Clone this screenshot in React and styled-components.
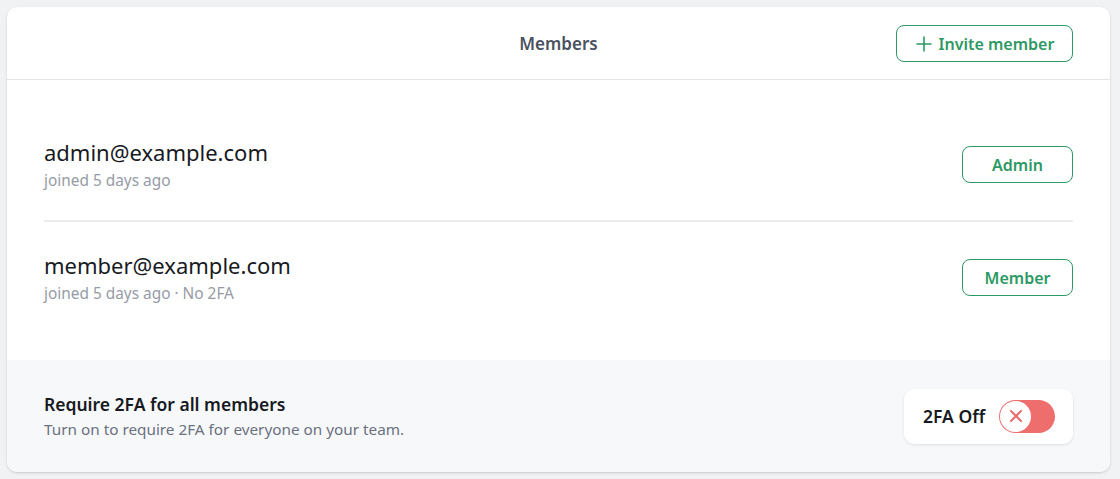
import React, { useState } from 'react';
import styled, { createGlobalStyle } from 'styled-components';

const GREEN = '#2d9964';

const GlobalStyle = createGlobalStyle`
  html, body {
    margin: 0;
    background: #f1f2f4;
    font-family: "Noto Sans", "Open Sans", sans-serif;
  }
  body {
    padding: 7px 10px 7px 7px;
  }
`;

const members = [
  { email: 'admin@example.com', meta: 'joined 5 days ago', role: 'Admin' },
  { email: 'member@example.com', meta: 'joined 5 days ago · No 2FA', role: 'Member' },
];

export default function App() {
  const [require2fa, setRequire2fa] = useState(false);

  return (
    <>
      <GlobalStyle />
      <StyledCard>
        <StyledHeader>
          <StyledTitle>Members</StyledTitle>
          <StyledInviteButton>
            <svg width="18" height="18" viewBox="0 0 18 18" fill="none">
              <path d="M9 2v14M2 9h14" stroke={GREEN} strokeWidth="1.6" strokeLinecap="round" />
            </svg>
            Invite member
          </StyledInviteButton>
        </StyledHeader>

        <StyledList>
          {members.map((m) => (
            <StyledRow key={m.email}>
              <div>
                <StyledEmail>{m.email}</StyledEmail>
                <StyledMeta>{m.meta}</StyledMeta>
              </div>
              <StyledRoleButton>{m.role}</StyledRoleButton>
            </StyledRow>
          ))}
        </StyledList>

        <StyledFooter>
          <div>
            <StyledFooterTitle>Require 2FA for all members</StyledFooterTitle>
            <StyledFooterText>Turn on to require 2FA for everyone on your team.</StyledFooterText>
          </div>
          <StyledToggleCard>
            <StyledToggleLabel>{require2fa ? '2FA On' : '2FA Off'}</StyledToggleLabel>
            <StyledSwitch on={require2fa} onClick={() => setRequire2fa(!require2fa)}>
              <StyledKnob on={require2fa}>
                <svg width="14" height="14" viewBox="0 0 14 14" fill="none">
                  <path d="M2 2l10 10M12 2L2 12" stroke="#ec6a6a" strokeWidth="2" strokeLinecap="round" />
                </svg>
              </StyledKnob>
            </StyledSwitch>
          </StyledToggleCard>
        </StyledFooter>
      </StyledCard>
    </>
  );
}

const StyledCard = styled.div`
  width: 1103px;
  background: #fff;
  border-radius: 10px;
  box-shadow: 0 1px 3px rgba(0, 0, 0, 0.12), 0 1px 2px rgba(0, 0, 0, 0.06);
  overflow: hidden;
`;

const StyledHeader = styled.div`
  position: relative;
  height: 73px;
  border-bottom: 1px solid #e2e4e9;
  display: flex;
  align-items: center;
  justify-content: flex-end;
  padding: 0 37px;
  box-sizing: border-box;
`;

const StyledTitle = styled.div`
  position: absolute;
  left: 0;
  right: 0;
  text-align: center;
  font-size: 17px;
  font-weight: 600;
  color: #4a5160;
  pointer-events: none;
`;

const StyledButtonBase = styled.button`
  font-family: inherit;
  background: #fff;
  border: 1.5px solid ${GREEN};
  color: ${GREEN};
  border-radius: 8px;
  font-size: 16px;
  font-weight: 600;
  height: 37px;
  display: flex;
  align-items: center;
  justify-content: center;
  gap: 6px;
  cursor: pointer;
`;

const StyledInviteButton = styled(StyledButtonBase)`
  position: relative;
  width: 177px;
  margin-top: 1px;
`;

const StyledRoleButton = styled(StyledButtonBase)`
  width: 111px;
`;

const StyledList = styled.div`
  padding: 28px 37px 28px;
`;

const StyledRow = styled.div`
  display: flex;
  align-items: center;
  justify-content: space-between;
  height: 112px;
  box-sizing: border-box;
  padding-top: 1px;

  & + & {
    border-top: 2px solid #ebecef;
  }
`;

const StyledEmail = styled.div`
  font-size: 22px;
  color: #171a22;
  line-height: 30px;
`;

const StyledMeta = styled.div`
  font-size: 15.4px;
  color: #969ba6;
  line-height: 22px;
  margin-top: 3px;
`;

const StyledFooter = styled.div`
  background: #f7f8fa;
  height: 112px;
  padding: 0 37px;
  box-sizing: border-box;
  display: flex;
  align-items: center;
  justify-content: space-between;
`;

const StyledFooterTitle = styled.div`
  font-size: 17.5px;
  font-weight: 600;
  color: #171a22;
  line-height: 24px;
`;

const StyledFooterText = styled.div`
  font-size: 15.3px;
  color: #6b7180;
  line-height: 22px;
  margin-top: 2px;
`;

const StyledToggleCard = styled.div`
  background: #fff;
  border-radius: 10px;
  box-shadow: 0 1px 3px rgba(0, 0, 0, 0.1);
  height: 55px;
  width: 169px;
  box-sizing: border-box;
  display: flex;
  align-items: center;
  padding: 0 18px 0 19px;
  justify-content: space-between;
`;

const StyledToggleLabel = styled.span`
  font-size: 17.5px;
  font-weight: 600;
  color: #171a22;
`;

const StyledSwitch = styled.div`
  width: 56px;
  height: 33px;
  border-radius: 17px;
  background: ${({ on }) => (on ? GREEN : '#ee6e6e')};
  display: flex;
  align-items: center;
  padding: 0 1px;
  box-sizing: border-box;
  justify-content: ${({ on }) => (on ? 'flex-end' : 'flex-start')};
  cursor: pointer;
`;

const StyledKnob = styled.div`
  width: 31px;
  height: 31px;
  border-radius: 50%;
  background: #fff;
  display: flex;
  align-items: center;
  justify-content: center;
`;
